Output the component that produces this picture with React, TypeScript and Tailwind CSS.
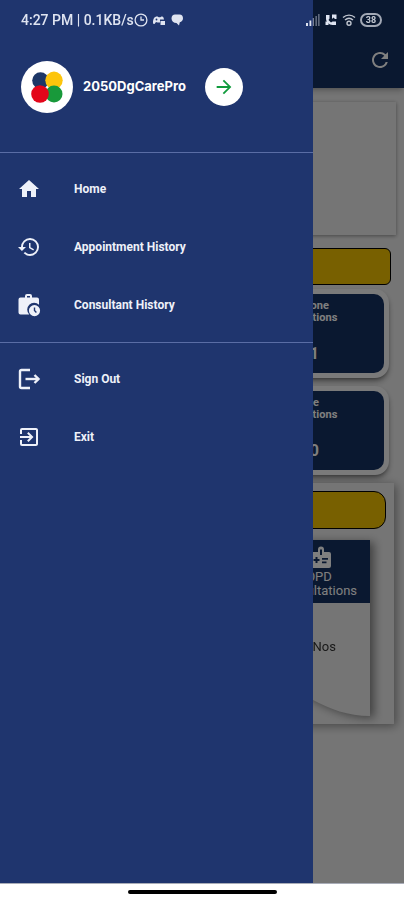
import type { ReactNode } from "react";
import { MdArrowForward, MdExitToApp, MdHistory, MdHome, MdRefresh } from "react-icons/md";

function ConsultantHistoryIcon() {
  return (
    <svg viewBox="0 0 24 24" className="size-6" fill="currentColor" aria-hidden="true">
      <path
        fillRule="evenodd"
        d="M8 4.500V3a2 2 0 0 1 2-2h3a2 2 0 0 1 2 2v1.500h5a2 2 0 0 1 2 2v5.300a6.700 6.700 0 0 0-9.800 9.700H3.500a2 2 0 0 1-2-2v-13a2 2 0 0 1 2-2zm2 0h3V3h-3z"
      />
      <path
        fillRule="evenodd"
        d="M17.500 12a5.600 5.600 0 1 0 0 11.200 5.600 5.600 0 0 0 0-11.200zm-.7 2.500h1.400v2.800l1.700 1.700-1 1-2.100-2.200z"
      />
    </svg>
  );
}

function SignOutIcon() {
  return (
    <svg viewBox="0 0 24 24" className="size-6" fill="none" stroke="currentColor" strokeWidth="2.400" aria-hidden="true">
      <path d="M13 3H4.500A1.500 1.500 0 0 0 3 4.500v15A1.500 1.500 0 0 0 4.500 21H13" />
      <path d="M8.500 12h13" />
      <path d="M17.500 8l4 4-4 4" />
    </svg>
  );
}

function Logo() {
  return (
    <svg viewBox="0 0 52 52" className="size-[52px] shrink-0" role="img" aria-label="DgCarePro logo">
      <circle cx="26" cy="26" r="26" fill="#fff" />
      <circle cx="19.500" cy="19.500" r="8.300" fill="#1d3767" />
      <circle cx="33" cy="19.300" r="8.700" fill="#fdc50c" />
      <circle cx="33" cy="33" r="8.500" fill="#18993a" />
      <circle cx="19" cy="33" r="8.800" fill="#e3061a" />
    </svg>
  );
}

function IdCardIcon() {
  return (
    <svg viewBox="0 0 24 24" className="size-6" fill="currentColor" aria-hidden="true">
      <path
        fillRule="evenodd"
        d="M9 6V3.500a3 3 0 0 1 6 0V6h5a2 2 0 0 1 2 2v12a2 2 0 0 1-2 2H4a2 2 0 0 1-2-2V8a2 2 0 0 1 2-2zm2-2.500V9h2V3.500zM6.500 11v2h-2v2h2v2h2v-2h2v-2h-2v-2zM13 12v1.800h6V12zm0 3.500v1.800h4.500v-1.800z"
      />
    </svg>
  );
}

function StatusBar() {
  return (
    <div className="pointer-events-none absolute inset-x-0 top-0 z-30 flex h-10 items-center justify-between pr-[22px] pl-[21px] text-[#dfe4f1]">
      <div className="flex items-center">
        <span className="text-sm font-medium whitespace-nowrap">4:27 PM | 0.1KB/s</span>
        <svg viewBox="0 0 14 14" className="size-3.5" fill="none" stroke="currentColor" strokeWidth="1.300" aria-hidden="true">
          <circle cx="7" cy="7" r="5.900" />
          <path d="M7 3.500V7h3" />
        </svg>
        <svg viewBox="0 0 14 14" className="ml-1 size-3.5" fill="currentColor" aria-hidden="true">
          <path d="M1 9.500c0-4 1.800-6 3.800-6 1.500 0 1.500.8 2.700.8s1.500-.8 2.500-.8c1.400 0 1.800 1.500 2 3H8v3H5.500L4 9 2.500 11C1.500 11 1 10.500 1 9.500z" />
          <path d="M8.500 8h4.500v4H8.500z" />
          <circle cx="4.500" cy="6.500" r=".9" fill="#1f356e" />
        </svg>
        <svg viewBox="0 0 14 14" className="ml-1 size-3.5" fill="currentColor" aria-hidden="true">
          <path d="M5 1.500h4.500c2.300 0 3.500 1.600 3.500 3.700 0 2.100-1.300 3.500-3.200 4L9 12.500 6.500 10C3.500 10 1.500 8 1.500 5.500c0-2.500 1.500-4 3.500-4z" />
        </svg>
      </div>
      <div className="flex items-center">
        <svg viewBox="0 0 14 14" className="size-3.5" fill="currentColor" aria-hidden="true">
          <path d="M0 10h2v3H0zM3.500 7.500h1.800V13H3.500z" />
          <path d="M6.700 5h1.300v8H6.700zM9.500 3h1.300v10H9.500zM12.200 1h1.300v12h-1.300z" opacity=".5" />
        </svg>
        <svg viewBox="0 0 14 14" className="ml-1 size-3.5" fill="currentColor" aria-hidden="true">
          <path d="M2 2h3.500v3.500L4.500 7 7 9.500 8.500 8.500H12V12H8.500C5 12 2 9 2 5.500z" />
          <path d="M8 1.500h4.500V6H11L9.500 4.500 8 6z" />
          <path d="M1.500 8.500h3V12h-3z" />
        </svg>
        <svg viewBox="0 0 14 14" className="ml-1 size-3.5" fill="none" stroke="#bfc4ce" strokeWidth="1.400" aria-hidden="true">
          <path d="M1 4.500c3.500-3.200 8.500-3.200 12 0M3 7c2.400-2.200 5.600-2.200 8 0" />
          <circle cx="7" cy="10.300" r="2" />
        </svg>
        <span className="ml-1 flex h-3.5 w-[22px] items-center justify-center rounded-full border-2 border-[#a2a8b5] text-[9px] leading-none font-bold text-[#c3c8d2]">
          38
        </span>
      </div>
    </div>
  );
}

function CountCard({ title, value }: { title: string; value: string }) {
  return (
    <div className="rounded-[14px] border-[5px] border-[#f4f4f4] bg-[#f4f4f4] shadow-md shadow-black/40">
      <div className="flex h-[79px] flex-col items-center rounded-[10px] bg-[#143060] pt-1.5 text-white">
        <p className="text-center text-[11px] leading-3 font-bold">
          {title}
          <br />
          Consultations
        </p>
        <p className="mt-5 text-base leading-5 font-bold">{value}</p>
      </div>
    </div>
  );
}

function SummaryCard({ title }: { title: string }) {
  return (
    <div className="w-[106px] drop-shadow-[4px_2px_5px_rgba(0,0,0,0.45)]">
      <div className="flex h-[63px] flex-col items-center bg-[#143060] pt-1.5 text-white">
        <div className="pl-2">
          <IdCardIcon />
        </div>
        <p className="text-center text-[13px] leading-3.5">
          <span className="pl-1">{title}</span>
          <br />
          Consultations
        </p>
      </div>
      <div className="relative h-[113px]">
        <svg viewBox="0 0 106 113" className="absolute inset-0 size-full" preserveAspectRatio="none" aria-hidden="true">
          <path d="M0 0H106V113C84 113 66 106 49 97C33 88 18 78 0 78z" fill="#ebebeb" />
        </svg>
        <p className="relative pt-[34px] pl-1 text-center text-[13px] text-[#333]">0 Nos</p>
      </div>
    </div>
  );
}

function Dashboard() {
  return (
    <div className="flex flex-1 flex-col bg-[#ebebeb]">
      <header className="flex h-[88px] items-end justify-end bg-[#143060] px-3 pb-4 text-white shadow-md shadow-black/20">
        <button type="button" aria-label="Refresh">
          <MdRefresh className="size-6" />
        </button>
      </header>
      <main className="flex flex-col">
        <div className="mx-2 mt-3.5 h-[133px] bg-[#ebebeb] shadow-[0_1px_4px_rgba(0,0,0,0.4)]" />
        <div className="mx-[13px] mt-[13px] h-[37px] rounded-md border border-black bg-[#f0c000]" />
        <div className="mt-1 ml-auto flex w-1/2 flex-col gap-2 pr-[15px] pl-[15px]">
          <CountCard title="Telephone" value="Rs 1" />
          <CountCard title="Online" value="Rs 0" />
        </div>
        <section className="mx-2.5 mt-2 bg-[#ebebeb] px-2 pt-2 pb-2 shadow-[2px_2px_9px_rgba(0,0,0,0.4)]">
          <div className="h-[38px] rounded-[12px] border border-black bg-[#f0c000]" />
          <div className="mt-[11px] flex justify-end px-4">
            <SummaryCard title="OPD" />
          </div>
        </section>
      </main>
    </div>
  );
}

function DrawerItem({ icon, label }: { icon: ReactNode; label: string }) {
  return (
    <li>
      <button type="button" className="flex h-[58px] w-full items-center gap-[33px] pl-[17px] text-left text-xs font-bold">
        {icon}
        {label}
      </button>
    </li>
  );
}

function Drawer() {
  return (
    <aside className="absolute inset-y-0 left-0 z-20 w-[313px] bg-[#1f356e] text-[#eef1f9]">
      <div className="flex h-[152px] items-center pt-[22px] pl-[21px]">
        <Logo />
        <span className="ml-2.5 w-[122px] font-[Inter,sans-serif] text-[13px] font-bold text-white">2050DgCarePro</span>
        <button
          type="button"
          aria-label="Open profile"
          className="flex size-[38px] items-center justify-center rounded-full bg-white text-[#119b3c]"
        >
          <MdArrowForward className="size-[22px]" />
        </button>
      </div>
      <nav>
        <ul className="border-t border-[#5a6da5] pt-[7px] pb-2">
          <DrawerItem icon={<MdHome className="size-6" />} label="Home" />
          <DrawerItem icon={<MdHistory className="size-6" />} label="Appointment History" />
          <DrawerItem icon={<ConsultantHistoryIcon />} label="Consultant History" />
        </ul>
        <ul className="border-t border-[#5a6da5] pt-[7px] pb-2">
          <DrawerItem icon={<SignOutIcon />} label="Sign Out" />
          <DrawerItem icon={<MdExitToApp className="size-6" />} label="Exit" />
        </ul>
      </nav>
    </aside>
  );
}

export default function App() {
  return (
    <div className="flex min-h-screen flex-col bg-white font-[Roboto,sans-serif]">
      <div className="relative flex flex-1 flex-col">
        <Dashboard />
        <div className="absolute inset-0 z-10 bg-black/50" />
        <Drawer />
        <StatusBar />
      </div>
      <div className="flex h-[17px] items-center justify-center border-t border-[#a9adb8]">
        <div className="h-1 w-[149px] rounded-full bg-black" />
      </div>
    </div>
  );
}
